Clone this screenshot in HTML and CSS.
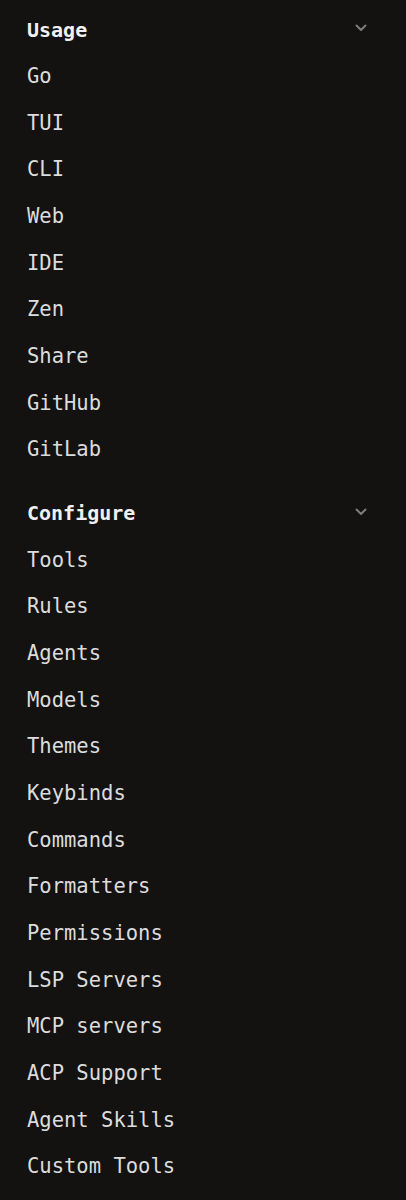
FILE: index.html
```html
<!DOCTYPE html>
<html>
<head>
<meta charset="utf-8">
<link rel="stylesheet" href="styles.css">
</head>
<body>
<nav class="sidebar">
  <section class="group">
    <div class="group-head">
      <span class="group-title">Usage</span>
      <svg class="chev" width="12" height="8" viewBox="0 0 12 8"><path d="M1.5 1.5 L6 6 L10.5 1.5" fill="none" stroke="currentColor" stroke-width="2" stroke-linecap="round" stroke-linejoin="round"/></svg>
    </div>
    <ul class="items">
      <li>Go</li>
      <li>TUI</li>
      <li>CLI</li>
      <li>Web</li>
      <li>IDE</li>
      <li>Zen</li>
      <li>Share</li>
      <li>GitHub</li>
      <li>GitLab</li>
    </ul>
  </section>
  <section class="group">
    <div class="group-head">
      <span class="group-title">Configure</span>
      <svg class="chev" width="12" height="8" viewBox="0 0 12 8"><path d="M1.5 1.5 L6 6 L10.5 1.5" fill="none" stroke="currentColor" stroke-width="2" stroke-linecap="round" stroke-linejoin="round"/></svg>
    </div>
    <ul class="items">
      <li>Tools</li>
      <li>Rules</li>
      <li>Agents</li>
      <li>Models</li>
      <li>Themes</li>
      <li>Keybinds</li>
      <li>Commands</li>
      <li>Formatters</li>
      <li>Permissions</li>
      <li>LSP Servers</li>
      <li>MCP servers</li>
      <li>ACP Support</li>
      <li>Agent Skills</li>
      <li>Custom Tools</li>
    </ul>
  </section>
</nav>
</body>
</html>
```
FILE: styles.css
```css
html, body {
  margin: 0;
  padding: 0;
  background: #131211;
}
body {
  font-family: "DejaVu Sans Mono", "Liberation Mono", monospace;
  font-size: 20.5px;
  color: #dcdcdc;
}
.sidebar {
  padding: 6.5px 39px 0 27px;
  display: flex;
  flex-direction: column;
  gap: 17px;
}
.group-head {
  height: 46.67px;
  display: flex;
  align-items: center;
  justify-content: space-between;
}
.group-title {
  font-weight: bold;
  color: #f0f0f0;
  font-size: 20px;
}
.chev {
  color: #7c7c7c;
  margin-top: -3px;
}
.items {
  list-style: none;
  margin: 0;
  padding: 0;
}
.items li {
  height: 46.67px;
  line-height: 46.67px;
}
```
